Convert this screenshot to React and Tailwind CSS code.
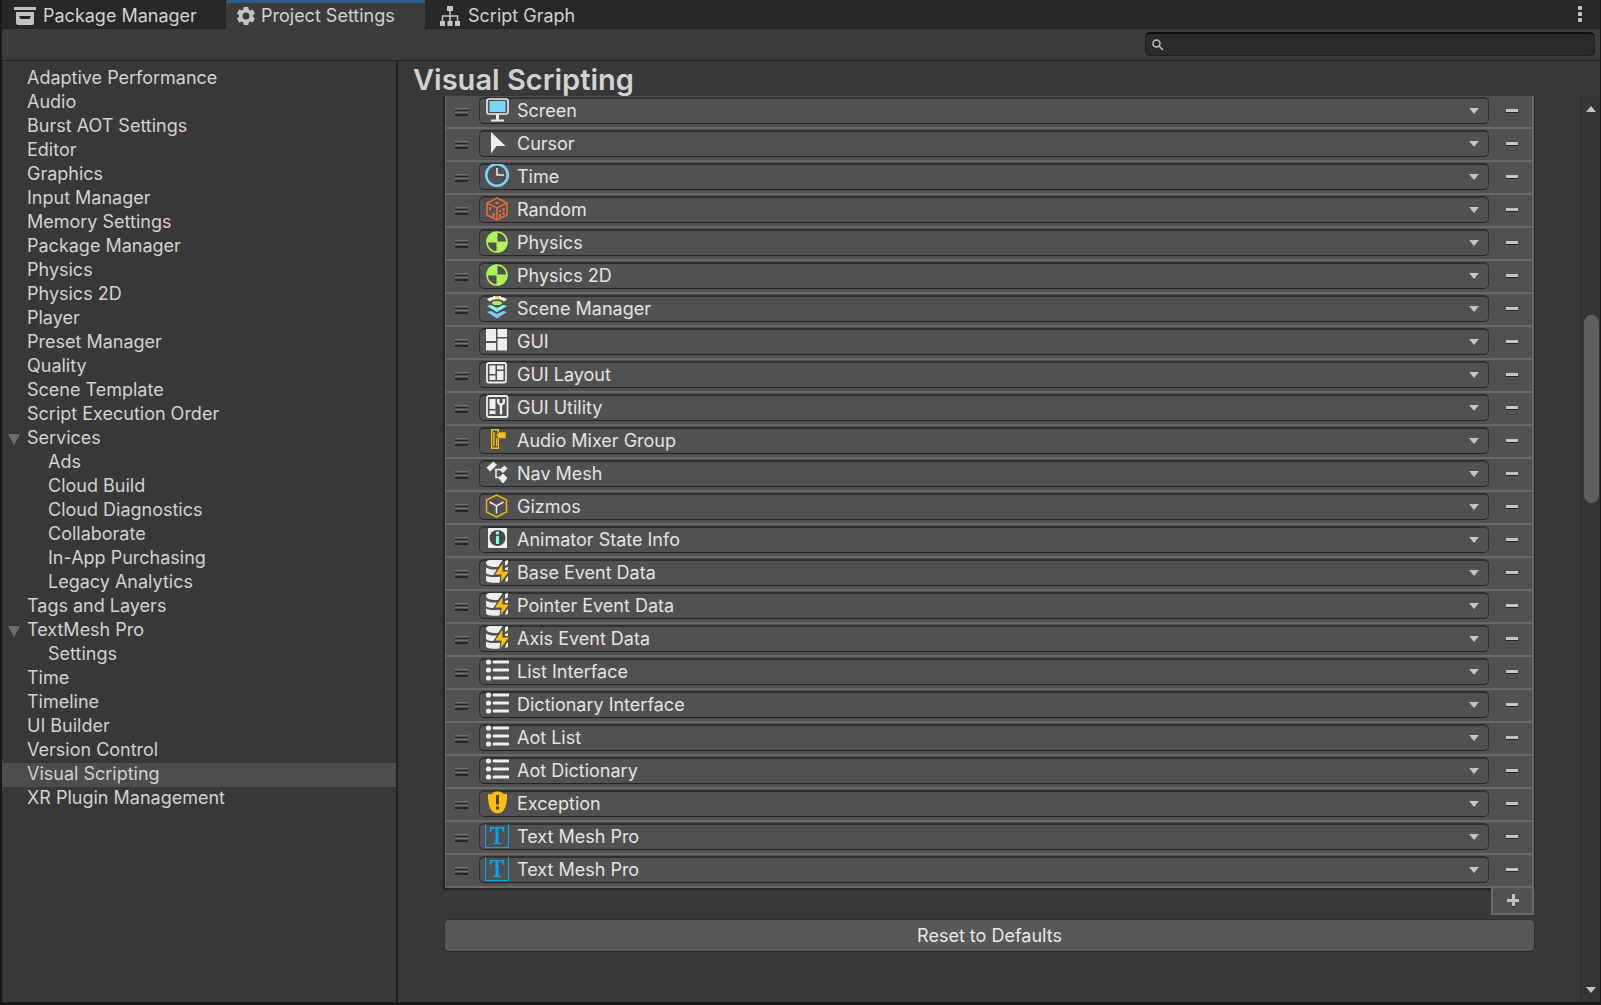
const SIDEBAR = [
  ["Adaptive Performance"], ["Audio"], ["Burst AOT Settings"], ["Editor"], ["Graphics"], ["Input Manager"],
  ["Memory Settings"], ["Package Manager"], ["Physics"], ["Physics 2D"], ["Player"], ["Preset Manager"],
  ["Quality"], ["Scene Template"], ["Script Execution Order"], ["Services", "group"], ["Ads", "child"],
  ["Cloud Build", "child"], ["Cloud Diagnostics", "child"], ["Collaborate", "child"],
  ["In-App Purchasing", "child"], ["Legacy Analytics", "child"], ["Tags and Layers"],
  ["TextMesh Pro", "group"], ["Settings", "child"], ["Time"], ["Timeline"], ["UI Builder"],
  ["Version Control"], ["Visual Scripting", "selected"], ["XR Plugin Management"],
];

const W = "#eeeeee";
const BG = "#515151";

const ballIcon = (
  <>
    <circle cx="12" cy="12" r="10" fill="none" stroke="#aef359" strokeWidth="1.600" />
    <path d="M12 12V1.500A10.500 10.500 0 0 0 1.500 12zM12 12V22.500A10.500 10.500 0 0 0 22.500 12z" fill="#aef359" />
    <path d="M12 2v20M2 12h20" stroke="#aef359" />
  </>
);
const eventIcon = (
  <>
    <path d="M1 2.500C1 0 5-.5 12-.5h6L13 7C8 7.500 1 6.500 1 2.500z" fill={W} />
    <path d="M1 7.500c4 2 7 2.300 11 2L9 15c-4 0-7-.5-8-2zM1 15.500c2 1.300 5 1.800 14 1.300v5.700C8 23 1 23 1 20z" fill={W} />
    <path d="M20 1l3-1v4l-3 2zM20 8l3-1v3h-3zM21 18l2-2v5l-3 1z" fill={W} />
    <path d="M18 2L9 15h7l-1 9 10-13h-7z" fill="#fdbf0f" stroke={BG} strokeWidth="1.200" />
  </>
);
const listIcon = (
  <>
    <path d="M9 3h14M9 11h14M9 19h14" stroke={W} strokeWidth="3" strokeLinecap="round" />
    <circle cx="3.500" cy="3" r="2.600" fill={W} />
    <circle cx="3.500" cy="11" r="2.600" fill={W} />
    <circle cx="3.500" cy="19" r="2.600" fill={W} />
  </>
);
const tmpIcon = (
  <>
    <path d="M.5 0v23.500h23V0" fill="none" stroke="#00a8f3" />
    <path d="M5 3h14v5h-1c-.5-3-1.500-3.700-4.500-3.700V17c0 1.700.5 2 2.500 2v1H8v-1c2 0 2.500-.3 2.500-2V4.300C7.500 4.300 6.500 5 6 8H5z" fill="#00a8f3" />
  </>
);

const ICONS = {
  screen: (
    <>
      <rect x="2" y="1" width="21" height="15" rx="2" fill="none" stroke={W} strokeWidth="1.600" />
      <rect x="4.500" y="3" width="16" height="11" fill="#7dd3ff" />
      <path d="M12.500 16v5.500M6 22.500h13" stroke={W} strokeWidth="2" />
      <path d="M12.500 16v5" stroke={W} strokeWidth="3" />
    </>
  ),
  cursor: <path d="M6 1v21.500l5.500-7.500 9 0z" fill={W} />,
  time: (
    <>
      <circle cx="12" cy="11" r="10.800" fill="none" stroke="#7dd3ff" strokeWidth="2.600" />
      <path d="M12 4v7h7" fill="none" stroke={W} strokeWidth="1.600" />
    </>
  ),
  random: (
    <g fill="none" stroke="#f26a3d" strokeWidth="1.500">
      <path d="M12 1l10 5v12l-10 5-10-5V6zM2 6l10 5 10-5M12 11v12" />
      <path d="M10.500 6h3M5 10v3M8.500 16v4M15 13v2M18.500 11v3M15 17v3M18.500 15v3" strokeWidth="2" />
    </g>
  ),
  ball: ballIcon,
  scene: (
    <>
      <path d="M2 3.500C5-.5 19-.5 22 3.500l-3 2C16 2.500 8 2.500 5 5.500z" fill={W} />
      <path d="M8 0h8v3H8z" fill={W} />
      <path d="M10 0h4v1.500h-4z" fill="#fdbf0f" />
      <ellipse cx="12" cy="7" rx="5" ry="2" fill="#aef359" />
      <path d="M2 10l4-1 6 3 6-3 4 1-10 6z" fill="#7dfff0" />
      <path d="M2 16l4-1 6 3 6-3 4 1-10 6.500z" fill="#7dc8f8" />
    </>
  ),
  gui: <path d="M1 0h10v12H1zM1 14h10v7.500H1zM12.500 0H22v8h-9.500zM12.500 9.500H22v12h-9.500z" fill={W} />,
  guiLayout: (
    <>
      <rect x="2" y="1" width="19" height="19.500" rx="1.500" fill="none" stroke={W} strokeWidth="1.800" />
      <path d="M4.500 3.500h6v8.500h-6zM4.500 13.500h6v4.500h-6zM12 3.500h6.500v4H12zM12 9h6.500v9H12z" fill={W} />
    </>
  ),
  guiUtility: (
    <>
      <rect x="2" y="1" width="20.500" height="21" rx="1.500" fill="none" stroke={W} strokeWidth="1.800" />
      <path d="M4.500 4h6v10h-6zM4.500 15.500h6V19h-6z" fill={W} />
      <path d="M12 4h2.500v4h3V4H20v4l-2.800 3v8.500h-2.400V11L12 8z" fill={W} />
    </>
  ),
  mixer: (
    <>
      <path d="M6.700 1.700h6.600v18.600H6.700zM9 4v14" fill="none" stroke="#fdbf0f" strokeWidth="1.400" />
      <path d="M11 7l3-3h7v6.500h-7z" fill="#fdbf0f" stroke={BG} strokeWidth=".6" />
      <path d="M11.500 10v8" stroke="#fdbf0f" />
    </>
  ),
  nav: (
    <>
      <path d="M1.500 6.500L8.500.5l3.500 3.500-7 6.500z" fill={W} />
      <path d="M10 8.500h9M11 8.500v8h8" fill="none" stroke={W} strokeWidth="1.500" />
      <path d="M15 9l4.500-4 2.500 2.500-4 4zM14 17l4-4 4 4-4 5z" fill={W} stroke={W} strokeLinejoin="round" />
    </>
  ),
  gizmos: (
    <>
      <path d="M11.500 1L21.500 6v12l-10 5-10-5V6z" fill="none" stroke="#eeb31a" strokeWidth="1.500" />
      <path d="M4.500 8l7 4 7-4M11.500 12v7.500" fill="none" stroke={W} strokeWidth="1.500" />
    </>
  ),
  info: (
    <>
      <rect x="3" y="1" width="19" height="20" fill={W} />
      <circle cx="12.500" cy="11" r="8" fill="#484848" />
      <path d="M11 4.500h3v3h-3zM11 9h3v8h-3z" fill="#7dfff0" />
    </>
  ),
  event: eventIcon,
  list: listIcon,
  exception: (
    <>
      <path d="M7.500 2.500C8 1 9.500.5 12.500.5s4.500.5 5 2c1.500.5 3 1 4.500.5.500 9-2 19.500-9.500 19.500S2.500 12 3 3c1.500.5 3 0 4.500-.5z" fill="#fdbf0f" />
      <path d="M11 4h3v9.500h-3zM11 15.500h3v3h-3z" fill="#484848" />
    </>
  ),
  tmp: tmpIcon,
};

const TYPES = [
  ["Screen", "screen"], ["Cursor", "cursor"], ["Time", "time"], ["Random", "random"], ["Physics", "ball"],
  ["Physics 2D", "ball"], ["Scene Manager", "scene"], ["GUI", "gui"], ["GUI Layout", "guiLayout"],
  ["GUI Utility", "guiUtility"], ["Audio Mixer Group", "mixer"], ["Nav Mesh", "nav"], ["Gizmos", "gizmos"],
  ["Animator State Info", "info"], ["Base Event Data", "event"], ["Pointer Event Data", "event"],
  ["Axis Event Data", "event"], ["List Interface", "list"], ["Dictionary Interface", "list"],
  ["Aot List", "list"], ["Aot Dictionary", "list"], ["Exception", "exception"],
  ["Text Mesh Pro", "tmp"], ["Text Mesh Pro", "tmp"],
];

function Arrow({ up, className = "" }) {
  return (
    <svg viewBox="0 0 10 6" className={`h-[6px] w-[10px] shrink-0 ${className}`} aria-hidden="true">
      <path d={up ? "M0 6h10L5 0z" : "M0 0h10L5 6z"} fill="#c4c4c4" />
    </svg>
  );
}

function TypeRow({ label, icon }) {
  return (
    <li className="flex h-[33px] items-start border-b-2 border-[#696969] pt-px">
      <span className="mt-[11px] ml-[9px] flex h-2 w-[13px] shrink-0 flex-col justify-between" aria-hidden="true">
        <span className="h-[3px] border-t border-b border-t-[#707070] border-b-[#262626]" />
        <span className="h-[4px] border-t border-b-2 border-t-[#707070] border-b-[#262626]" />
      </span>
      <div className="relative ml-[11px] h-[27px] min-w-0 flex-1">
        <select
          aria-label={`${label} type`}
          className="h-full w-full appearance-none rounded-[5px] border border-t-2 border-[#303030] border-b-[#242424] bg-[#515151] pl-[37px] text-[18px] leading-6 text-[#e4e4e4] outline-none"
        >
          <option>{label}</option>
        </select>
        <svg viewBox="0 0 24 24" className="pointer-events-none absolute top-[1px] left-[6px] size-6" aria-hidden="true">
          {ICONS[icon]}
        </svg>
        <Arrow className="pointer-events-none absolute top-[11px] right-[10px]" />
      </div>
      <button type="button" aria-label={`Remove ${label}`} className="flex h-7 w-[43px] shrink-0 items-center justify-center pl-[2px]">
        <span className="h-1 w-3 border-b border-[#262626] bg-[#c4c4c4]" />
      </button>
    </li>
  );
}

export default function App() {
  return (
    <div className="flex min-h-screen flex-col border-r border-b-[3px] border-l-2 border-[#191919] bg-[#383838] font-['Inter',sans-serif] text-[18px] text-[#d2d2d2]">
      <nav className="flex h-[29px] items-stretch border-b border-[#232323] bg-[#282828]" aria-label="Windows">
        <button type="button" className="flex w-[224px] items-center gap-[7px] border-r border-[#232323] pt-1 pl-3 leading-6">
          <svg viewBox="0 0 22 18" className="h-[18px] w-[22px]" aria-hidden="true">
            <path d="M0 0h22v3H0z" fill="#c4c4c4" />
            <path d="M2 5h18v11a2 2 0 0 1-2 2H4a2 2 0 0 1-2-2zM5 9l1.500 3h9L17 9z" fill="#c4c4c4" fillRule="evenodd" />
          </svg>
          Package Manager
        </button>
        <button type="button" className="-mb-px flex w-[199px] items-center gap-[5px] border-t-[3px] border-[#2c5d87] bg-[#3c3c3c] pl-[10px] leading-6">
          <svg viewBox="0 0 20 20" className="size-5" aria-hidden="true">
            <path fillRule="evenodd" fill="#c4c4c4" d="M7.700 1h4.600l.5 2.700 1.300.8 2.600-1 2.300 4-2.100 1.700v1.600l2.100 1.700-2.300 4-2.600-1-1.300.8-.5 2.700H7.700l-.5-2.700-1.300-.8-2.600 1-2.300-4 2.100-1.700V9.200L1 7.500l2.300-4 2.600 1 1.300-.8zM10 6.500a3.500 3.500 0 1 0 0 7 3.500 3.500 0 0 0 0-7z" />
          </svg>
          Project Settings
        </button>
        <button type="button" className="flex items-center gap-2 pt-1 pl-[15px] leading-6">
          <svg viewBox="0 0 20 20" className="size-5" aria-hidden="true">
            <path d="M7 0h6v5H7zM0 15h5v5H0zM7.500 15h5v5h-5zM15 15h5v5h-5z" fill="#c4c4c4" />
            <path d="M10 5v10M2.500 15v-5h15v5" fill="none" stroke="#c4c4c4" strokeWidth="1.500" />
          </svg>
          Script Graph
        </button>
        <button type="button" aria-label="Menu" className="mr-[18px] ml-auto flex flex-col justify-center gap-[2px]">
          <span className="size-1 rounded-[1px] bg-[#c4c4c4]" />
          <span className="size-1 rounded-[1px] bg-[#c4c4c4]" />
          <span className="size-1 rounded-[1px] bg-[#c4c4c4]" />
        </button>
      </nav>

      <div className="flex h-8 items-start justify-end border-b border-[#232323] bg-[#3c3c3c] pt-[3px] pr-[5px]">
        <label className="flex h-6 w-[450px] items-center rounded-[5px] border border-t-2 border-[#1f1f1f] border-t-[#0d0d0d] bg-[#2a2a2a] pl-[6px]">
          <svg viewBox="0 0 12 12" className="size-3" aria-hidden="true">
            <circle cx="4.500" cy="4.500" r="3.500" fill="none" stroke="#c4c4c4" strokeWidth="1.500" />
            <path d="M7 7l4 4" stroke="#c4c4c4" strokeWidth="1.500" />
          </svg>
          <input type="text" aria-label="Search settings" className="min-w-0 flex-1 bg-transparent px-2 outline-none" />
        </label>
      </div>

      <div className="flex flex-1">
        <ul className="w-[396px] shrink-0 border-r-2 border-[#202020] pt-[6px]">
          {SIDEBAR.map(([label, kind]) => (
            <li key={label} className={kind === "selected" ? "bg-[#4d4d4d]" : ""}>
              <button type="button" className={`flex h-6 w-full items-start text-left leading-[22px] ${kind === "child" ? "pl-[46px]" : kind === "group" ? "pl-[6px]" : "pl-[25px]"}`}>
                {kind === "group" && (
                  <svg viewBox="0 0 12 11" className="mt-[7px] mr-[7px] h-[11px] w-3" aria-hidden="true">
                    <path d="M0 0h12L6 11z" fill="#6c6c6c" />
                  </svg>
                )}
                {label}
              </button>
            </li>
          ))}
        </ul>

        <main className="flex min-w-0 flex-1 flex-col">
          <h1 className="h-[35px] pl-[15px] text-[29px] leading-[38px] font-semibold">Visual Scripting</h1>
          <div className="flex flex-1">
            <div className="mr-[45px] ml-[45px] min-w-0 flex-1">
              <div className="border-r border-b-2 border-l-2 border-[#242424] bg-[#515151]">
                <ul className="border-r-2 border-l border-[#696969]">
                  {TYPES.map(([label, icon], i) => (
                    <TypeRow key={i} label={label} icon={icon} />
                  ))}
                </ul>
              </div>
              <div className="flex justify-end pr-px">
                <button type="button" aria-label="Add type" className="-mt-[2px] flex h-[27px] w-[43px] items-center justify-center border-2 border-t-0 border-[#696969] bg-[#515151]">
                  <svg viewBox="0 0 12 13" className="h-[13px] w-3" aria-hidden="true">
                    <path d="M0 9h5v4h3V9h4" fill="#262626" />
                    <path d="M5 0h3v5h4v3H8v4H5V8H0V5h5z" fill="#c4c4c4" />
                  </svg>
                </button>
              </div>
              <div className="mt-1 flex pl-px">
                <button type="button" className="h-[33px] flex-1 rounded-[5px] border border-[#303030] border-b-[#242424] bg-[#585858] text-[#e8e8e8]">
                  Reset to Defaults
                </button>
              </div>
            </div>
            <div className="flex w-5 shrink-0 flex-col items-center border-l-2 border-[#303030] bg-[#353535] pt-[10px] pb-[9px]">
              <Arrow up />
              <div className="mt-[203px] h-[188px] w-[15px] rounded-full bg-[#5f5f5f]" />
              <Arrow className="mt-auto" />
            </div>
          </div>
        </main>
      </div>
    </div>
  );
}
